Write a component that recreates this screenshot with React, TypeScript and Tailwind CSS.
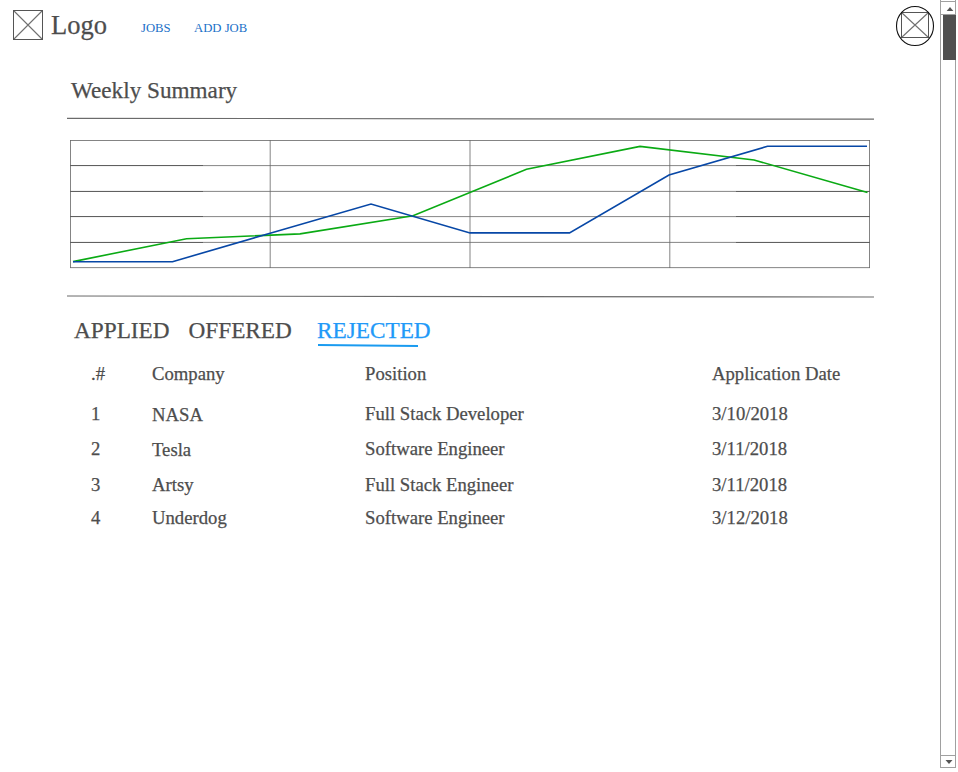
import React from "react";

const jobs = [
  { id: 1, company: "NASA", position: "Full Stack Developer", date: "3/10/2018", row: "h-[35px]", nudge: "pt-px" },
  { id: 2, company: "Tesla", position: "Software Engineer", date: "3/11/2018", row: "h-[36px]", nudge: "pt-px" },
  { id: 3, company: "Artsy", position: "Full Stack Engineer", date: "3/11/2018", row: "h-[33px]", nudge: "" },
  { id: 4, company: "Underdog", position: "Software Engineer", date: "3/12/2018", row: "h-[33px]", nudge: "" },
];

const columns = "grid grid-cols-[61px_213px_347px_200px]";

function Header() {
  return (
    <header className="flex h-[76px] items-start pl-3 pr-[5px]">
      <svg className="mt-[9px] shrink-0" width="32" height="32" viewBox="12 9 32 32" fill="none">
        <path d="M13.5 10.5L42.5 39.5M42.5 10.5L13.5 39.5" stroke="#707070" strokeWidth="1.1" />
        <rect x="13.5" y="10.5" width="29" height="29" stroke="#555" />
      </svg>
      <span className="ml-[7px] mt-[9px] w-[90px] text-[26.5px] leading-8">Logo</span>
      <nav className="mt-5 flex text-[12.7px] leading-4 text-[#1a70c8] [-webkit-text-stroke:0px]">
        <a className="w-[53px]">JOBS</a>
        <a>ADD JOB</a>
      </nav>
      <svg className="ml-auto mt-[5px]" width="40" height="42" viewBox="895 5 40 42" fill="none">
        <path d="M901.5 12.5L928.5 37.5M928.5 12.5L901.5 37.5" stroke="#707070" strokeWidth="1.1" />
        <rect x="901.5" y="12.5" width="27" height="25" stroke="#555" />
        <ellipse cx="915" cy="26" rx="18.5" ry="19.5" stroke="#111" strokeWidth="1.1" />
      </svg>
    </header>
  );
}

function Chart() {
  return (
    <svg className="block" width="820" height="212" viewBox="60 104 820 212" fill="none">
      <g stroke="#6b6b6b" strokeWidth="1.2">
        <path d="M67 118.3L874 119.2M67 296L874 297" />
      </g>
      <g stroke="#666" strokeWidth="0.8">
        <rect x="70.4" y="140.4" width="799.2" height="127.3" />
        <path d="M70 165.6H870M70 191.4H870M70 216.6H870M70 242.4H870" />
        <path d="M270.2 140V268M470 140V268M669.8 140V268" />
      </g>
      <path d="M70 165.5H203M70 191.5H203M70 216.5H203M70 242.5H203M736 165.5H870M736 191.5H870M736 216.5H870M736 242.5H870" stroke="#606060" />
      <polyline points="73,261.6 186.5,238.7 300,233.9 413,215.8 526.5,169.3 640,146.4 754,160 867.5,192.4" stroke="#0aaa14" strokeWidth="1.6" />
      <polyline points="73,261.7 172.5,261.7 271,233 371,204 470,232.9 569.5,232.9 669,175 767.5,146.3 867,146.3" stroke="#0747a6" strokeWidth="1.6" />
    </svg>
  );
}

function Tabs() {
  return (
    <div className="flex h-[46px] pl-[14px] text-[23.25px] leading-7">
      <span className="w-[114.5px]">APPLIED</span>
      <span className="w-[128.5px]">OFFERED</span>
      <div className="flex flex-col text-[#2199f8]">
        <span>REJECTED</span>
        <svg width="104" height="5" viewBox="317 344 104 5">
          <path d="M318 345L418 346" stroke="#1a9bf0" strokeWidth="1.9" />
        </svg>
      </div>
    </div>
  );
}

function Scrollbar() {
  return (
    <aside className="flex h-[768px] w-4 shrink-0 flex-col border-x border-[#a0a0a0]">
      <div className="mt-px flex h-[14px] items-center justify-center border-y border-[#a0a0a0] pl-[3px] pt-[2px]">
        <svg width="8" height="6" viewBox="0 0 8 6"><path d="M0.7 5L4 1L7.3 5Z" fill="#555" /></svg>
      </div>
      <div className="-mr-px ml-[2px] h-[45px] bg-[#505050]" />
      <div className="mt-auto flex h-[13px] items-center justify-center border-y border-[#a0a0a0] pl-[2px] pt-px">
        <svg width="8" height="6" viewBox="0 0 8 6"><path d="M0.5 1L4 5L7.5 1Z" fill="#555" /></svg>
      </div>
    </aside>
  );
}

export default function App() {
  return (
    <div className="flex h-[772px] w-[958px] overflow-hidden bg-white font-['Liberation_Serif','Times_New_Roman',serif] text-[#4d4d4d] [-webkit-text-stroke:0.25px_currentColor]">
      <div className="w-[940px]">
        <Header />
        <main className="pl-[60px]">
          <h1 className="h-7 pl-[11px] text-[23.2px] leading-7">Weekly Summary</h1>
          <Chart />
          <Tabs />
          <section className="pl-[31px] text-[18.7px] leading-6">
            <div className={`${columns} h-10`}>
              <span>.#</span>
              <span>Company</span>
              <span>Position</span>
              <span>Application Date</span>
            </div>
            {jobs.map((job) => (
              <div key={job.id} className={`${columns} ${job.row}`}>
                <span>{job.id}</span>
                <span className={job.nudge}>{job.company}</span>
                <span>{job.position}</span>
                <span>{job.date}</span>
              </div>
            ))}
          </section>
        </main>
      </div>
      <Scrollbar />
    </div>
  );
}
